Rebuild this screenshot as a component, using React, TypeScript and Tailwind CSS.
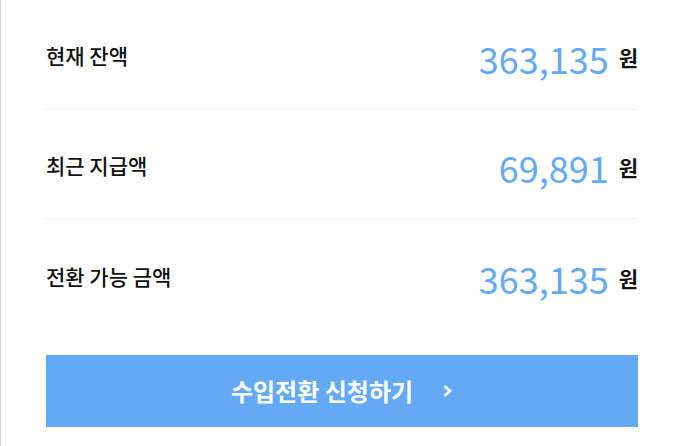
import React from 'react';

const rows = [
    { label: '현재 잔액', amount: '363,135', h: 'h-[110px] border-b' },
    { label: '최근 지급액', amount: '69,891', h: 'h-[109px] border-b' },
    { label: '전환 가능 금액', amount: '363,135', h: 'h-[112px]' },
];

export default function App() {
    return (
        <div
            className="min-h-[446px] w-full bg-white border-l border-[#cfd6dc] pl-[45px] pr-[39px]"
            style={{ fontFamily: '"Noto Sans CJK KR", "Noto Sans", sans-serif' }}
        >
            {rows.map((r) => (
                <div key={r.label} className={`flex items-center justify-between border-[#ececec] ${r.h}`}>
                    <span className="text-[21px] font-medium text-[#111111] leading-none pt-[2px]">{r.label}</span>
                    <div className="flex items-center gap-[10px]">
                        <span className="text-[36px] font-normal text-[#64a9f4] leading-none pt-[6px]">{r.amount}</span>
                        <span className="text-[21px] font-bold text-[#111111] leading-none pt-[6px]">원</span>
                    </div>
                </div>
            ))}

            <button className="mt-[24px] flex h-[72px] w-full items-center justify-center gap-[30px] bg-[#63a9f4] text-white">
                <span className="text-[24px] font-bold leading-none">수입전환 신청하기</span>
                <svg width="10" height="12" viewBox="0 0 10 12" fill="none">
                    <polyline points="2.5,2 7,6 2.5,10" stroke="white" strokeWidth="2.8" strokeLinecap="square" />
                </svg>
            </button>
        </div>
    );
}
